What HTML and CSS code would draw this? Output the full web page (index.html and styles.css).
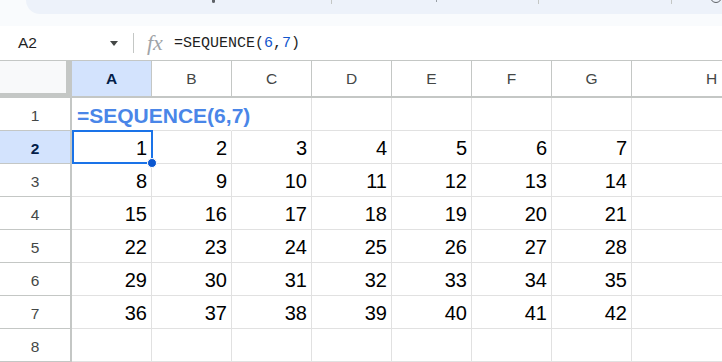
FILE: index.html
```html
<!DOCTYPE html>
<html lang="en">
<head>
  <meta charset="UTF-8" />
  <meta name="viewport" content="width=device-width, initial-scale=1.0"/>
  <title>SEQUENCE – Sheet</title>
  <link rel="stylesheet" href="styles.css">
</head>
<body>

  <div class="topbar">
    <div class="toolbar">
      <span class="tb-blob"></span>
      <span class="tb-sep s1"></span>
      <span class="tb-mark"></span>
      <span class="tb-sep s2"></span>
      <span class="tb-sep s3"></span>
      <span class="tb-ring"></span>
    </div>
  </div>

  <div class="formula-bar">
    <div class="namebox">
      <span>A2</span>
      <span class="caret"></span>
    </div>
    <span class="fsep"></span>
    <span class="fx">fx</span>
    <span class="formula">=SEQUENCE(<span class="arg">6</span>,<span class="arg">7</span>)</span>
  </div>

  <div class="sheet">
    <div class="corner"></div>
    <div class="colhead active">A</div>
    <div class="colhead">B</div>
    <div class="colhead">C</div>
    <div class="colhead">D</div>
    <div class="colhead">E</div>
    <div class="colhead">F</div>
    <div class="colhead">G</div>
    <div class="colhead">H</div>

    <!-- row 1 -->
    <div class="rowhead">1</div>
    <div class="cell text spill"><span class="title">=SEQUENCE(6,7)</span></div>
    <div class="cell spill"></div>
    <div class="cell"></div>
    <div class="cell"></div>
    <div class="cell"></div>
    <div class="cell"></div>
    <div class="cell"></div>
    <div class="cell"></div>

    <!-- row 2 -->
    <div class="rowhead active">2</div>
    <div class="cell">1<div class="sel"><span class="handle"></span></div></div>
    <div class="cell">2</div>
    <div class="cell">3</div>
    <div class="cell">4</div>
    <div class="cell">5</div>
    <div class="cell">6</div>
    <div class="cell">7</div>
    <div class="cell"></div>

    <!-- row 3 -->
    <div class="rowhead">3</div>
    <div class="cell">8</div>
    <div class="cell">9</div>
    <div class="cell">10</div>
    <div class="cell">11</div>
    <div class="cell">12</div>
    <div class="cell">13</div>
    <div class="cell">14</div>
    <div class="cell"></div>

    <!-- row 4 -->
    <div class="rowhead">4</div>
    <div class="cell">15</div>
    <div class="cell">16</div>
    <div class="cell">17</div>
    <div class="cell">18</div>
    <div class="cell">19</div>
    <div class="cell">20</div>
    <div class="cell">21</div>
    <div class="cell"></div>

    <!-- row 5 -->
    <div class="rowhead">5</div>
    <div class="cell">22</div>
    <div class="cell">23</div>
    <div class="cell">24</div>
    <div class="cell">25</div>
    <div class="cell">26</div>
    <div class="cell">27</div>
    <div class="cell">28</div>
    <div class="cell"></div>

    <!-- row 6 -->
    <div class="rowhead">6</div>
    <div class="cell">29</div>
    <div class="cell">30</div>
    <div class="cell">31</div>
    <div class="cell">32</div>
    <div class="cell">33</div>
    <div class="cell">34</div>
    <div class="cell">35</div>
    <div class="cell"></div>

    <!-- row 7 -->
    <div class="rowhead">7</div>
    <div class="cell">36</div>
    <div class="cell">37</div>
    <div class="cell">38</div>
    <div class="cell">39</div>
    <div class="cell">40</div>
    <div class="cell">41</div>
    <div class="cell">42</div>
    <div class="cell"></div>

    <!-- row 8 -->
    <div class="rowhead">8</div>
    <div class="cell"></div>
    <div class="cell"></div>
    <div class="cell"></div>
    <div class="cell"></div>
    <div class="cell"></div>
    <div class="cell"></div>
    <div class="cell"></div>
    <div class="cell"></div>
  </div>

</body>
</html>
```

FILE: styles.css
```css
* {
  margin: 0;
  padding: 0;
  box-sizing: border-box;
}

body {
  font-family: "Liberation Sans", Arial, sans-serif;
  background: #fff;
  color: #1f1f1f;
  width: 722px;
  height: 362px;
  overflow: hidden;
}

/* Top toolbar strip (cut off) */
.topbar {
  height: 26px;
  background: #f9fbfd;
}

.toolbar {
  height: 14px;
  margin-left: 26px;
  background: #edf2fa;
  border-bottom-left-radius: 14px;
  display: flex;
  align-items: flex-start;
  overflow: hidden;
}

.tb-blob {
  margin-left: 186px;
  width: 6px;
  height: 3px;
  background: #5f6368;
  border-radius: 0 0 3px 3px;
}

.tb-sep {
  width: 1px;
  height: 4px;
  background: #c4c7c5;
}

.tb-sep.s1 { margin-left: 116px; }
.tb-sep.s2 { margin-left: 101px; }
.tb-sep.s3 { margin-left: 132px; }

.tb-mark {
  margin-left: 105px;
  width: 2px;
  height: 2px;
  background: #9aa0a6;
}

.tb-ring {
  margin-left: 39px;
  margin-top: -9px;
  width: 12px;
  height: 12px;
  flex-shrink: 0;
  border: 1.5px solid #5f6368;
  border-radius: 50%;
}

/* Formula bar */
.formula-bar {
  height: 34px;
  display: flex;
  align-items: center;
  background: #fff;
}

.namebox {
  width: 133px;
  padding: 0 15px 0 18px;
  display: flex;
  align-items: center;
  justify-content: space-between;
  font-size: 15.5px;
  color: #1f1f1f;
}

.caret {
  width: 0;
  height: 0;
  border-left: 4.5px solid transparent;
  border-right: 4.5px solid transparent;
  border-top: 5px solid #444746;
}

.fsep {
  width: 1px;
  height: 20px;
  background: #c4c7c5;
}

.fx {
  margin-left: 13px;
  font-family: "Liberation Serif", serif;
  font-style: italic;
  font-size: 22px;
  color: #a0a4a8;
}

.formula {
  margin-left: 11px;
  font-family: "Liberation Mono", monospace;
  font-size: 15px;
  color: #1f1f1f;
}

.formula .arg {
  color: #1155cc;
}

/* Grid */
.sheet {
  display: grid;
  grid-template-columns: 72px repeat(7, 80px) 160px;
  grid-template-rows: 37px repeat(8, 33px);
  width: 722px;
  overflow: hidden;
  border-top: 1px solid #c4c7c5;
}

.corner {
  background: #f8f9fa;
  border-right: 6px solid #c4c7c5;
  border-bottom: 5px solid #c4c7c5;
}

.colhead {
  display: flex;
  align-items: center;
  justify-content: center;
  border-right: 1px solid #c4c7c5;
  border-bottom: 2px solid #c4c7c5;
  font-size: 15.5px;
  color: #444746;
}

.colhead.active {
  background: #d3e3fd;
  color: #041e49;
  font-weight: bold;
}

.rowhead {
  display: flex;
  align-items: center;
  justify-content: center;
  padding-top: 3px;
  border-right: 2px solid #c4c7c5;
  border-bottom: 1px solid #c4c7c5;
  font-size: 15.5px;
  color: #444746;
}

.rowhead.active {
  background: #d3e3fd;
  color: #041e49;
  font-weight: bold;
}

.cell {
  position: relative;
  display: flex;
  align-items: center;
  justify-content: flex-end;
  padding: 3px 4px 0 0;
  border-right: 1px solid #e1e1e1;
  border-bottom: 1px solid #e1e1e1;
  font-size: 20px;
  color: #000;
}

.cell.text {
  justify-content: flex-start;
  padding-left: 5px;
}

.cell.spill {
  border-right-color: transparent;
}

.title {
  white-space: nowrap;
  font-size: 21px;
  font-weight: bold;
  color: #4a86e8;
}

/* Active cell */
.sel {
  position: absolute;
  top: -1px;
  left: 0;
  right: -2px;
  bottom: -1px;
  border: 2px solid #1a73e8;
  z-index: 2;
}

.handle {
  position: absolute;
  right: -6px;
  bottom: -6px;
  width: 10px;
  height: 10px;
  border-radius: 50%;
  background: #0b57d0;
  border: 1px solid #fff;
}
```
